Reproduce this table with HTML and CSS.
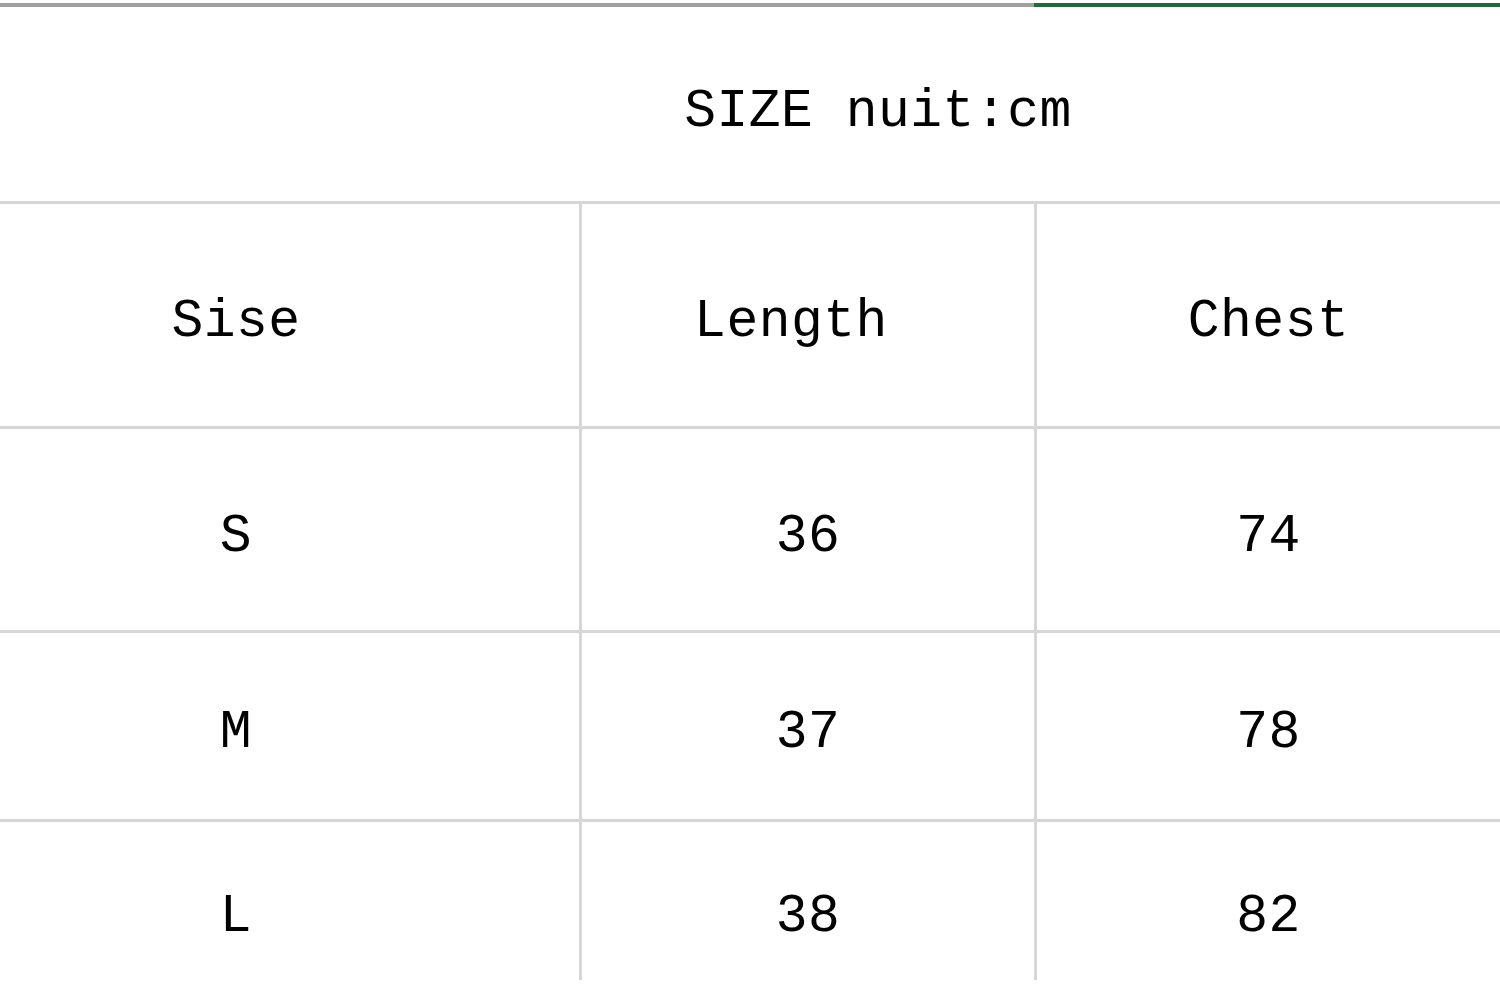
FILE: index.html
```html
<!DOCTYPE html>
<html>
<head>
<meta charset="utf-8">
<link rel="stylesheet" href="styles.css">
</head>
<body>
<div class="sheet">
  <div class="topbar"><div class="bar-gray"></div><div class="bar-green"></div></div>
  <div class="title">SIZE nuit:cm</div>
  <div class="grid">
    <div class="cell c0 r-head">Sise</div>
    <div class="cell c1 r-head shift-left">Length</div>
    <div class="cell c2 r-head">Chest</div>

    <div class="cell c0 r-s">S</div>
    <div class="cell c1 r-s">36</div>
    <div class="cell c2 r-s">74</div>

    <div class="cell c0 r-m">M</div>
    <div class="cell c1 r-m">37</div>
    <div class="cell c2 r-m">78</div>

    <div class="cell c0 r-l last">L</div>
    <div class="cell c1 r-l last">38</div>
    <div class="cell c2 r-l last">82</div>
  </div>
</div>
</body>
</html>
```
FILE: styles.css
```css
html, body {
  margin: 0;
  padding: 0;
  background: #ffffff;
}
body {
  width: 1500px;
  height: 985px;
  overflow: hidden;
  font-family: "Liberation Mono", "DejaVu Sans Mono", monospace;
  color: #000;
}
.sheet {
  display: flex;
  flex-direction: column;
}
.topbar {
  display: flex;
  margin-top: 3px;
  height: 4px;
}
.bar-gray {
  width: 1034px;
  background: #a0a0a0;
}
.bar-green {
  flex: 1;
  background: #1f6b3c;
}
.title {
  box-sizing: border-box;
  height: 197px;
  border-bottom: 3px solid #d6d6d6;
  display: flex;
  align-items: center;
  justify-content: center;
  padding-left: 256px;
  padding-top: 16px;
  font-size: 53px;
  letter-spacing: 0.5px;
}
.grid {
  display: grid;
  grid-template-columns: 582px 455px 463px;
}
.cell {
  box-sizing: border-box;
  display: flex;
  align-items: center;
  justify-content: center;
  border-bottom: 3px solid #d6d6d6;
  font-size: 53px;
  letter-spacing: 0.5px;
  padding-top: 14px;
}
.c0, .c1 {
  border-right: 3px solid #d6d6d6;
}
.c0 {
  padding-right: 107px;
}
.shift-left {
  padding-right: 34px;
}
.r-head { height: 225px; }
.r-s { height: 204px; }
.r-m { height: 189px; }
.r-l { height: 158px; padding-top: 32px; }
.last { border-bottom: none; }
```
